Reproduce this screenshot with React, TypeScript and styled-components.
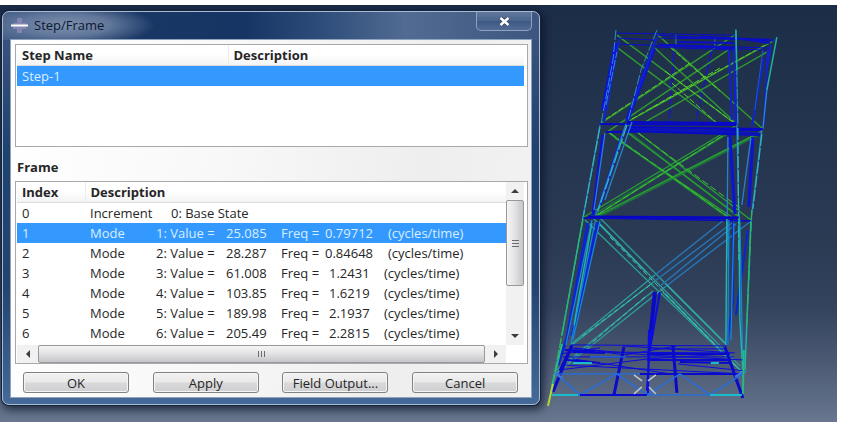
import React, { useState } from "react";
import styled, { createGlobalStyle } from "styled-components";

const GlobalStyle = createGlobalStyle`
  * { box-sizing: border-box; }
  body { margin: 0; background: #fff; }
  button { font: inherit; color: inherit; padding: 0; }
`;

const Page = styled.main`
  padding: 5px 4px 0 0;
  font-family: "Open Sans", "Noto Sans", sans-serif;
  font-size: 13px;
  line-height: 20px;
  color: #262626;
`;

const Workspace = styled.div`
  display: flex;
  align-items: stretch;
  height: calc(100vh - 5px);
  min-height: 417px;
  overflow: hidden;
  background: linear-gradient(#1c2d48 0%, #23344f 28%, #2c3b54 58%, #35445e 73%, #4c5a74 86%, #68778f 100%);
`;

const Dialog = styled.section`
  display: flex;
  flex-direction: column;
  flex: 0 0 64.3%;
  align-self: flex-start;
  margin: 6px 0 0 2px;
  padding: 0 7px 6px;
  border: 1px solid #a9bbd2;
  border-radius: 7px;
  background:
    radial-gradient(ellipse 90px 22px at 62px 13px, #7d8fae 0%, #61779b 50%, transparent 100%) 0 0 / 100% 28px no-repeat,
    linear-gradient(90deg, #3f5b84 0%, #1a3865 18%, #173564 45%, #2b4a78 58%, #516b92 75%, #3c5680 100%) 0 0 / 100% 28px no-repeat,
    linear-gradient(#3d5680 0%, #20426f 35%, #23446f 70%, #456a99 100%);
  box-shadow: 0 0 0 1px #13233d, 2px 3px 9px 2px rgba(4, 12, 30, 0.65);
`;

const TitleBar = styled.header`
  display: flex;
  align-items: flex-start;
  justify-content: space-between;
  height: 27px;
`;

const Title = styled.h1`
  display: flex;
  align-items: center;
  gap: 6px;
  margin: 3px 0 0 1px;
  font-size: 13px;
  font-weight: 400;
  color: #0c1a30;
`;

const CloseButton = styled.button`
  display: grid;
  place-items: center;
  width: 56px;
  height: 19px;
  border: 1px solid #8fa3c0;
  border-top: 0;
  border-radius: 0 0 5px 5px;
  background: linear-gradient(#60789b, #4a648c 50%, #3d5984 51%, #506c96);
`;

const Client = styled.div`
  display: flex;
  flex-direction: column;
  padding: 4px 3px 4px 4px;
  border: 1px solid #8ea3bd;
  background: linear-gradient(100deg, #fff 0%, #f8f8f8 40%, #eeeeef 75%, #f3f3f3 100%);
`;

const ListBox = styled.div`
  border: 1px solid #a6a8ab;
  padding: 0 3px 0 1px;
  background: #fff;
`;

const StepList = styled(ListBox)`
  height: 103px;
`;

const FrameList = styled(ListBox)`
  display: grid;
  grid-template-columns: 1fr 18px;
  grid-template-rows: 163px 18px;
  align-items: start;
`;

const Table = styled.table`
  width: 100%;
  table-layout: fixed;
  border-collapse: collapse;
`;

const HeadCell = styled.th<{ $width?: string }>`
  width: ${(p) => p.$width ?? "auto"};
  height: 20px;
  padding: 0 5px;
  text-align: left;
  font-weight: 700;
  line-height: 18px;
  border-right: 1px solid #ececec;
  border-bottom: 1px solid #dcdcdc;
  background: linear-gradient(#fff 45%, #f2f3f4);
  &:last-child { border-right: 0; }
`;

const Row = styled.tr<{ $selected?: boolean }>`
  cursor: default;
  color: ${(p) => (p.$selected ? "#d9eeff" : "inherit")};
  background: ${(p) => (p.$selected ? "#3399ff" : "transparent")};
`;

const Cell = styled.td`
  height: 20px;
  padding: 0 5px;
  line-height: 20px;
  white-space: pre;
`;

const ModeLine = styled.div`
  display: grid;
  grid-template-columns: 66px 70px 55px 44px 59px 1fr;
`;

const BaseLine = styled.div`
  display: grid;
  grid-template-columns: 81px 1fr;
`;

const Shifted = styled.span<{ $by: number }>`
  padding-left: ${(p) => p.$by}px;
`;

const SectionLabel = styled.h2`
  margin: 10px 0 4px 2px;
  font-size: 13px;
  line-height: 20px;
  font-weight: 700;
`;

const VScroll = styled.div`
  display: grid;
  align-self: stretch;
  grid-template-rows: 18px 86px 1fr 18px;
  background: #f1f1f1;
`;

const HScroll = styled.div`
  display: grid;
  grid-column: 1 / -1;
  align-self: stretch;
  grid-template-columns: 21px 1fr 21px 18px;
  background: #f1f1f1;
`;

const ArrowButton = styled.button`
  display: grid;
  place-items: center;
  border: 0;
  background: transparent;
`;

const Thumb = styled.div<{ $vertical?: boolean }>`
  display: grid;
  place-items: center;
  border: 1px solid #999;
  border-radius: 2px;
  background: linear-gradient(${(p) => (p.$vertical ? "90deg" : "180deg")}, #f5f5f5, #e4e4e6 45%, #c5c6c9);
`;

const Corner = styled.div`
  background: #fff;
`;

const Actions = styled.footer`
  display: flex;
  justify-content: space-between;
  padding: 8px 10px 0 8px;
`;

const ActionButton = styled.button`
  flex: 0 0 21.4%;
  height: 21px;
  line-height: 18px;
  border: 1px solid #828282;
  border-radius: 3px;
  background: linear-gradient(#f2f2f2, #e9e9e9 48%, #d9d9db 52%, #cfcfd2);
  box-shadow: inset 0 0 0 1px #f5f5f5;
`;

const Viewport = styled.div`
  flex: 1;
  min-width: 0;
`;

const Drawing = styled.svg`
  display: block;
  width: 100%;
  height: 417px;
`;

const modes = [
  ["1", "25.085", "0.79712"],
  ["2", "28.287", "0.84648"],
  ["3", "61.008", "1.2431"],
  ["4", "103.85", "1.6219"],
  ["5", "189.98", "2.1937"],
  ["6", "205.49", "2.2815"],
];

const Arrow = ({ d }: { d: string }) => (
  <svg width="8" height="8" viewBox="0 0 8 8" aria-hidden="true">
    <path d={d} fill="#3c3c3c" />
  </svg>
);

const Grip = ({ d }: { d: string }) => (
  <svg width="9" height="9" viewBox="0 0 9 9" aria-hidden="true">
    <path d={d} stroke="#6c6c70" fill="none" />
  </svg>
);

type Stroke = { color: string; width?: number; dash?: string; d: string };

const strokes: Stroke[] = [
  // inner uprights
  { color: "#1717c4", width: 1.5, dash: "12 2", d: "M674 50L669 125M712 50L695 125" },
  { color: "#2c7fd0", d: "M676 34V46M715 37V47" },
  // upper bay bracing
  { color: "#2f9a30", width: 1.4, d: "M617 35L737 125M618 48L717 123M657 34L763 129M655 48L738 125M736 34L601 123M728 50L607 132M775 40L627 122M767 52L645 122" },
  { color: "#63d02c", width: 1, dash: "6 2", d: "M665 71L737 125M690 63L606 119M672 83L717 123M720 68L632 119M765 45L650 109M670 47L720 91" },
  // middle bay bracing
  { color: "#1f6d40", width: 2, d: "M609 133L727 217M737 128L590 217M630 133L740 218M760 134L600 216" },
  { color: "#28a030", width: 1.3, d: "M608 132L727 216M615 138L732 217M628 125L751 220M628 133L740 217M737 125L584 217M723 136L594 217M762 131L597 216M753 136L603 213" },
  { color: "#45c03e", width: 1, dash: "7 3", d: "M610 133L727 216M722 136L594 217M630 127L740 208" },
  // lower bay bracing
  { color: "#2b9f9c", width: 1.3, d: "M585 220L743 373M593 218L740 366M600 218L727 345M655 281L572 345M655 275L570 345M665 287L557 373M653 291L557 370" },
  { color: "#2676b8", width: 1.4, d: "M724 220L655 275M736 220L655 281M736 224L659 287M750 222L665 287" },
  { color: "#2cb0a4", width: 1.4, d: "M666 284L727 345M663 292L743 373M646 272L600 224" },
  { color: "#48c8a0", width: 1, dash: "5 3", d: "M610 237L743 373M650 285L580 338M645 297L558 372" },
  // top ring
  { color: "#0c0ccc", d: "M617 33L736 35M617 38L657 40M656 35L775 41M660 38L770 39M658 44L770 48M620 44L766 50M656 47L735 50M700 36L775 40" },
  { color: "#0b10c8", width: 2, d: "M677 37L735 39M660 45L736 48M735 38L770 43M678 42L735 43" },
  // upper legs
  { color: "#0b13d8", width: 4, d: "M616 43L603 110M654 48L627 121" },
  { color: "#1123d0", width: 2, d: "M619 40L608 101L604 122M657 37L631 110M729 50L732 120M734 49L736 125M768 50L764 125M764 58L752 127M771 45L767 70" },
  { color: "#1a5bc6", d: "M736 34L738 125M763 50L755 110" },
  { color: "#2e8bd1", dash: "10 2", d: "M616 30L613 60L601 124M657 30L641 70L628 121M736 29L737 70L738 125M606 105L617 52" },
  { color: "#24b0a0", width: 1.5, d: "M777 37L767 90M736 30L737 70" },
  { color: "#2b8ad8", width: 1.3, d: "M767 90L763 129" },
  // second ring
  { color: "#0808c8", width: 2, d: "M600 124L737 125M627 122L736 123M606 132L762 130M628 127L763 129M628 131L760 135" },
  { color: "#0b13bc", width: 3, d: "M627 129L735 132M735 133L760 134" },
  // middle legs
  { color: "#0b13d8", width: 3, d: "M603 135L593 215M622 136L600 205M730 135L735 214M753 137L749 207" },
  { color: "#2781ce", width: 1.3, d: "M600 125L583 218M605 133L594 210M626 124L595 218M632 122L605 200M728 137L727 260M737 125L739 219M751 138L742 205M762 130L751 221" },
  { color: "#31b4ba", width: 1.3, dash: "12 2", d: "M600 127L583 218M627 125L598 211M738 128L739 260M762 134L753 209" },
  // third ring
  { color: "#0505c4", width: 3, d: "M588 217L739 218" },
  { color: "#0909c4", width: 1.5, d: "M595 218L751 221M583 218L739 218" },
  // lower legs
  { color: "#0b25d4", width: 3, d: "M588 223L567 338L558 365M598 222L572 336" },
  { color: "#0b25d4", width: 2, d: "M733 222L733 302L727 345M748 230L736 315" },
  { color: "#1686d8", width: 1.3, d: "M592 220L566 345M595 222L571 343M600 221L573 340M729 220L728 345M734 223L731 340M740 220L743 372" },
  { color: "#20b8ae", width: 1.4, d: "M583 218L562 335M592 223L574 325M727 219L726 345M739 218L740 320L743 372M751 221L745 373" },
  { color: "#29b765", width: 1.3, dash: "10 2", d: "M583 220L560 345L549 402M752 210L751 230L747 325" },
  // central post
  { color: "#0a0ac4", width: 4, d: "M655 292L650 340" },
  { color: "#0b0be4", width: 2, d: "M660 292L650 350M649 330L648 394M651 330L647 391" },
  // deck
  { color: "#0b0bdc", width: 1, d: "M572 345L727 346M570 348L647 355L743 360M570 352L729 353M563 357L734 357M561 365L743 374M575 348L625 355L677 346M623 346L735 353M600 348L560 354M560 370L648 359L727 354M678 364L745 371M573 359L677 375M648 349L727 349" },
  { color: "#0a0acc", width: 2, d: "M640 374H743M573 352L605 353M647 354L730 354M647 360H730M680 362L732 363M565 350L595 351M567 360L600 363" },
  { color: "#0a0ac8", width: 3, d: "M624 347L614 395M673 346L677 393M725 347L743 398M572 345L553 392M570 350L560 371" },
  { color: "#246ee0", width: 1.4, d: "M556 374L580 395L617 374L647 395L680 374L710 395L743 374M556 374H640M647 395H710M590 357H626" },
  { color: "#0909d4", width: 2, d: "M580 395H647" },
  { color: "#19bcc8", width: 2, d: "M552 395H578M710 395H742M573 363H592M711 363H719" },
  { color: "#27b881", width: 2, d: "M562 344L552 386M744 350L743 394" },
  { color: "#b5d72b", width: 2, d: "M553 384L548 406" },
  { color: "#4377d5", width: 2, d: "M554 373L563 378M735 377L743 372" },
  // origin marker
  { color: "#c4c8cc", width: 1.4, d: "M634 375L642 381M656 375L648 381M634 394L642 387M649 387L656 394" },
];

export default function App() {
  const [selected, setSelected] = useState("1");
  return (
    <Page>
      <GlobalStyle />
      <Workspace>
        <Dialog role="dialog" aria-labelledby="dialog-title">
          <TitleBar>
            <Title id="dialog-title">
              <svg width="17" height="17" viewBox="0 0 17 17" aria-hidden="true">
                <path d="M6 1h5v5h4v6h-4v4H6v-4H2V6h4z" fill="#9a8fc0" opacity=".65" />
                <path d="M0 8.5h17" stroke="#fff" strokeWidth="2" />
              </svg>
              Step/Frame
            </Title>
            <CloseButton aria-label="Close">
              <svg width="11" height="9" viewBox="0 0 11 9" aria-hidden="true">
                <path d="M1.5 1L9.5 8M9.5 1L1.5 8" stroke="#36455e" strokeWidth="4" />
                <path d="M1.5 1L9.5 8M9.5 1L1.5 8" stroke="#fff" strokeWidth="2.5" />
              </svg>
            </CloseButton>
          </TitleBar>
          <Client>
            <StepList>
              <Table>
                <thead>
                  <tr>
                    <HeadCell $width="211px">Step Name</HeadCell>
                    <HeadCell>Description</HeadCell>
                  </tr>
                </thead>
                <tbody>
                  <Row $selected>
                    <Cell>Step-1</Cell>
                    <Cell />
                  </Row>
                </tbody>
              </Table>
            </StepList>
            <SectionLabel>Frame</SectionLabel>
            <FrameList>
              <Table>
                <thead>
                  <tr>
                    <HeadCell $width="68px">Index</HeadCell>
                    <HeadCell>Description</HeadCell>
                  </tr>
                </thead>
                <tbody>
                  <Row $selected={selected === "0"} onClick={() => setSelected("0")}>
                    <Cell>0</Cell>
                    <Cell>
                      <BaseLine>
                        <span>Increment</span>
                        <span>0: Base State</span>
                      </BaseLine>
                    </Cell>
                  </Row>
                  {modes.map(([index, value, freq]) => {
                    const short = freq.length < 7;
                    return (
                      <Row key={index} $selected={selected === index} onClick={() => setSelected(index)}>
                        <Cell>{index}</Cell>
                        <Cell>
                          <ModeLine>
                            <span>Mode</span>
                            <span>{index}: Value =</span>
                            <span>{value}</span>
                            <span>Freq =</span>
                            <Shifted $by={short ? 4 : 0}>{freq}</Shifted>
                            <Shifted $by={short ? 0 : 4}>(cycles/time)</Shifted>
                          </ModeLine>
                        </Cell>
                      </Row>
                    );
                  })}
                </tbody>
              </Table>
              <VScroll>
                <ArrowButton aria-label="Scroll up"><Arrow d="M0 6L4 2L8 6z" /></ArrowButton>
                <Thumb $vertical><Grip d="M1 1.5h7M1 4.5h7M1 7.5h7" /></Thumb>
                <span />
                <ArrowButton aria-label="Scroll down"><Arrow d="M0 2h8L4 6z" /></ArrowButton>
              </VScroll>
              <HScroll>
                <ArrowButton aria-label="Scroll left"><Arrow d="M6 0v8L2 4z" /></ArrowButton>
                <Thumb><Grip d="M1.5 1v6M4.5 1v6M7.5 1v6" /></Thumb>
                <ArrowButton aria-label="Scroll right"><Arrow d="M2 0l4 4l-4 4z" /></ArrowButton>
                <Corner />
              </HScroll>
            </FrameList>
            <Actions>
              <ActionButton>OK</ActionButton>
              <ActionButton>Apply</ActionButton>
              <ActionButton>Field Output...</ActionButton>
              <ActionButton>Cancel</ActionButton>
            </Actions>
          </Client>
        </Dialog>
        <Viewport>
          <Drawing viewBox="540 5 297 417" role="img" aria-label="Deformed tower wireframe">
            {strokes.map((s, i) => (
              <path key={i} d={s.d} fill="none" stroke={s.color} strokeWidth={s.width ?? 1} strokeDasharray={s.dash} />
            ))}
          </Drawing>
        </Viewport>
      </Workspace>
    </Page>
  );
}
